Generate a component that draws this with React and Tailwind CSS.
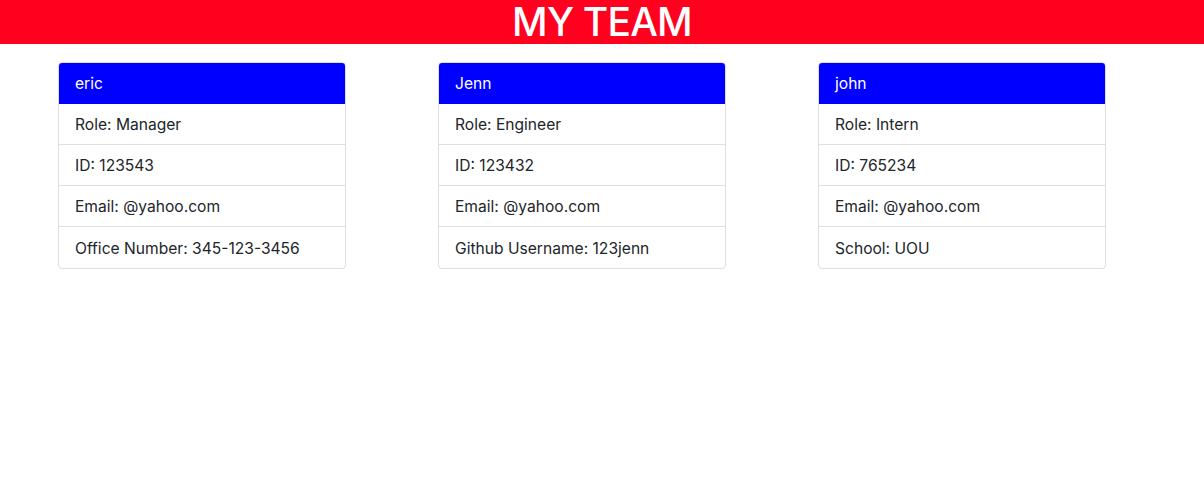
import React from "react";

const team = [
  { name: "eric", rows: ["Role: Manager", "ID: 123543", "Email: @yahoo.com", "Office Number: 345-123-3456"] },
  { name: "Jenn", rows: ["Role: Engineer", "ID: 123432", "Email: @yahoo.com", "Github Username: 123jenn"] },
  { name: "john", rows: ["Role: Intern", "ID: 765234", "Email: @yahoo.com", "School: UOU"] },
];

export default function App() {
  return (
    <div className="min-h-[500px] bg-white text-[#212529]" style={{ fontFamily: "Inter, 'Liberation Sans', sans-serif" }}>
      <header className="h-[44px] bg-[#ff001e] flex items-center justify-center">
        <h1 className="text-[39px] leading-[44px] text-white font-medium tracking-[-0.8px]">MY TEAM</h1>
      </header>
      <div className="flex gap-[92px] pl-[58px] pt-[18px]">
        {team.map((m) => (
          <div key={m.name} className="w-[288px] border border-[#dfdfdf] rounded-[4px] overflow-hidden">
            <div className="h-[41px] bg-[#0000ff] text-white text-[15.6px] flex items-center px-[16px] pt-[1px]">{m.name}</div>
            {m.rows.map((r, i) => (
              <div key={i} className={"h-[41px] flex items-center px-[16px] pt-[2px] text-[15.6px] " + (i < 3 ? "border-b border-[#dfdfdf]" : "")}>
                {r}
              </div>
            ))}
          </div>
        ))}
      </div>
    </div>
  );
}
